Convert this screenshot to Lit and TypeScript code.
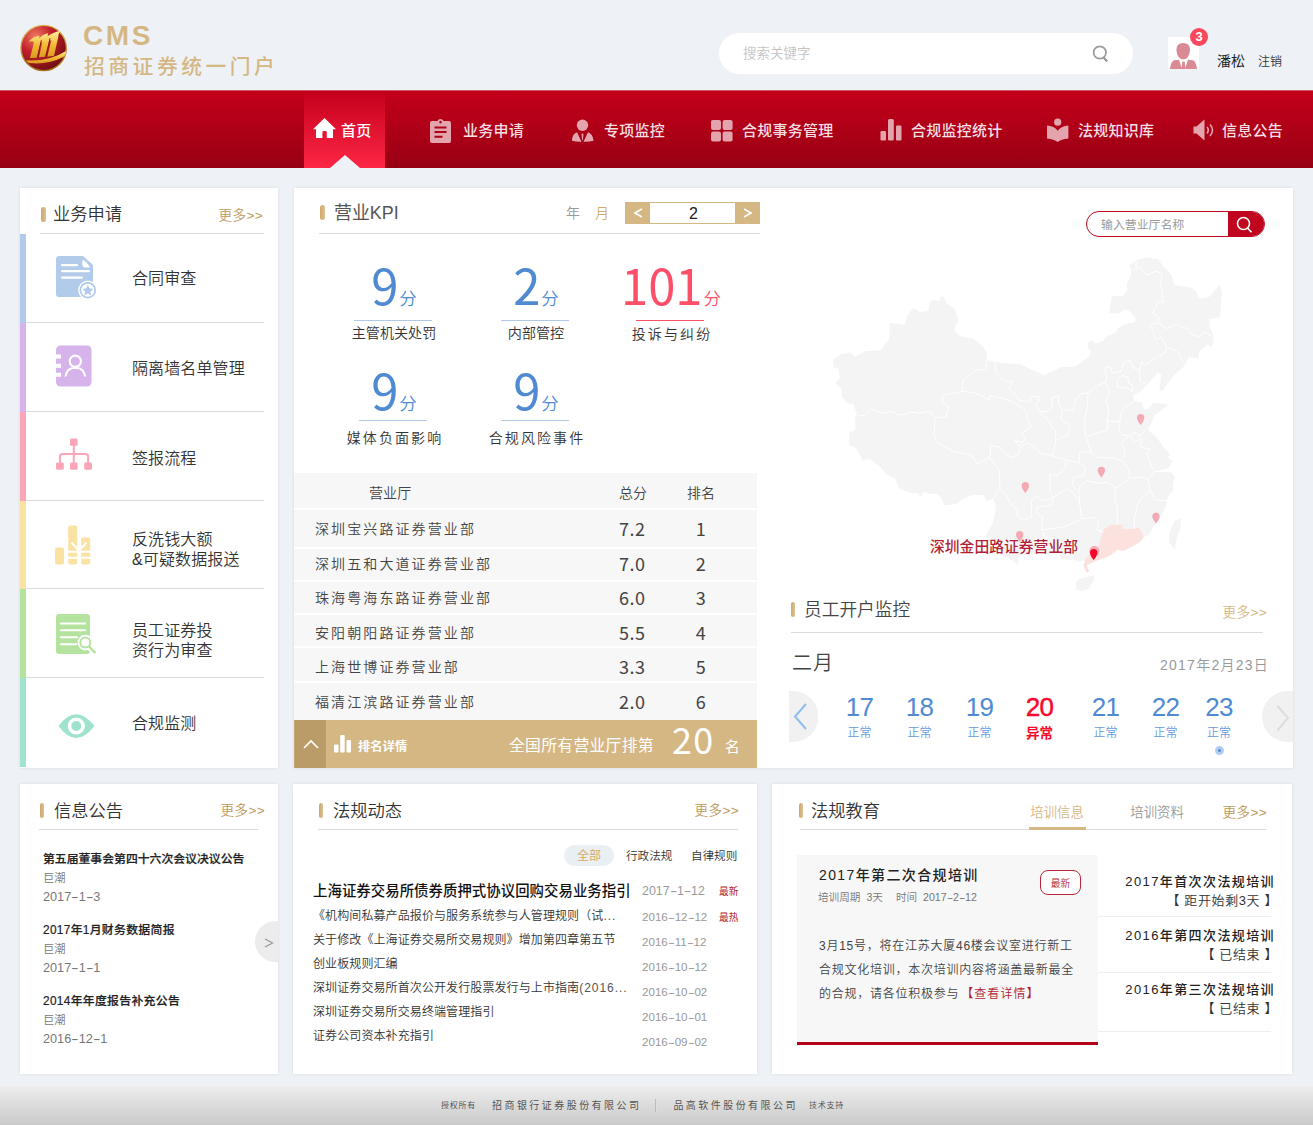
import { LitElement, html, css, svg } from "lit";
import { customElement, state } from "lit/decorators.js";

/* ---------- data ---------- */

const NAV = [
  { label: "首页", icon: svg`<path d="M11.5 0 23 11.2h-3V20h-6.2v-5.6a1.4 1.4 0 0 0-1.4-1.4h-1.6a1.4 1.4 0 0 0-1.4 1.4V20H3v-8.800H0z" fill="#fff"/>` },
  { label: "业务申请", icon: svg`<path fill-rule="evenodd" d="M2 2h5.500a3.200 3.200 0 0 1 6 0H19a2 2 0 0 1 2 2v18a2 2 0 0 1-2 2H2a2 2 0 0 1-2-2V4a2 2 0 0 1 2-2zM4.500 7.500v2h12v-2zM4.500 12v2h12v-2zM4.500 16.800v2h8v-2zM10.500 1.800a1.300 1.300 0 1 0 .01 0z"/>` },
  { label: "专项监控", icon: svg`<circle cx="10.500" cy="6.200" r="5.700"/><path d="M5 13.200 9.500 22.800Q4 23 0 21.800 0 15 5 13.200zM16 13.200 11.500 22.800Q17 23 21.500 21.800 21 15 16 13.200zM10.500 14.300l1 1-.7 6h-.6l-.7-6z"/>` },
  { label: "合规事务管理", icon: svg`<rect y="1" width="10" height="10" rx="2"/><rect x="11.600" y="1" width="10" height="10" rx="2"/><rect y="12.400" width="10" height="10" rx="2"/><rect x="11.600" y="12.400" width="10" height="10" rx="2"/>` },
  { label: "合规监控统计", icon: svg`<rect x=".5" y="12" width="5.500" height="9.500" rx="1.200"/><rect x="8" y="0" width="5.800" height="21.500" rx="1.500"/><rect x="16" y="6.500" width="5.500" height="15" rx="1.200"/>` },
  { label: "法规知识库", icon: svg`<circle cx="10.700" cy="3.200" r="3.600"/><path d="M0 6.600q7 .3 10.700 5.200Q14.500 7 21.400 6.600V19.500Q14 20 10.700 23 7 20 0 19.500z"/>` },
  { label: "信息公告", icon: svg`<path d="M.5 7.500h3L11.500.5v21L3.500 14.500h-3z"/><path d="M14 8q2.600 3 0 6.500M17 5.500q5 5.500 0 11.500" fill="none" stroke="#e3a4ad" stroke-width="1.600"/>` },
];

const APPLY = [
  { tone: "blue", lines: ["合同审查"], icon: svg`
    <path d="M4 22h24l10 9v29q0 3-3 3H4q-3 0-3-3V25q0-3 3-3z"/>
    <path d="M27.300 26q4.500 1 7.500 7.500h-4.500q-3 0-3-3z" fill="#fff"/>
    <path d="M7 31.200h15M7 37.200h27M7 43.600h20" stroke="#fff" stroke-width="2.200" stroke-linecap="round"/>
    <circle cx="32.800" cy="56.200" r="9.600" fill="#fff"/><circle cx="32.800" cy="56.200" r="7.400" fill="none" stroke="#b2cbeb" stroke-width="1.700"/>
    <path d="M32.800 51l1.700 3.300 3.700.6-2.700 2.600.6 3.700-3.300-1.700-3.300 1.700.6-3.700-2.700-2.600 3.700-.6z"/>` },
  { tone: "purple", lines: ["隔离墙名单管理"], icon: svg`
    <rect x="1" y="22.500" width="35.500" height="41" rx="4.500"/>
    <path d="M0 33.500h6M0 42.700h6M0 51.800h6" stroke="#fff" stroke-width="4"/>
    <circle cx="20.300" cy="38.200" r="5.600" fill="none" stroke="#fff" stroke-width="2.100"/>
    <path d="M10.500 53.500q1-8.600 9.800-8.800 8.800.2 9.800 8.800" fill="none" stroke="#fff" stroke-width="2.100"/>` },
  { tone: "pink", lines: ["签报流程"], icon: svg`
    <rect x="15" y="26.500" width="7.600" height="7.300" rx="1.400"/><rect x="1" y="50.500" width="7.800" height="7.200" rx="1.400"/><rect x="15" y="50.500" width="7.600" height="7.200" rx="1.400"/><rect x="29.200" y="50.500" width="7.800" height="7.200" rx="1.400"/>
    <path d="M18.800 33v18M4.900 51v-6.500q0-2.500 2.500-2.500h23.200q2.500 0 2.500 2.500V51" fill="none" stroke="#fba5b8" stroke-width="2"/>` },
  { tone: "yellow", lines: ["反洗钱大额", "&可疑数据报送"], icon: svg`
    <rect x="0" y="46.500" width="9" height="17" rx="2.200"/><rect x="13.200" y="24.500" width="9" height="39" rx="2.200"/><rect x="26.200" y="36.500" width="9" height="27" rx="2.200"/>
    <path d="M16.500 41.500l7.300 8M31.500 41.500l-7.300 8M13 50.700h23M13 56.700h23" fill="none" stroke="#fff" stroke-width="2"/>` },
  { tone: "green", lines: ["员工证券投", "资行为审查"], icon: svg`
    <rect x="1" y="25" width="34" height="40" rx="3"/>
    <path d="M6 34.500h24M6 41.300h24M6 48.300h16M6 55.200h15" stroke="#fff" stroke-width="2.100" stroke-linecap="round"/>
    <circle cx="30.300" cy="53.600" r="7.800" fill="#fff"/><path d="M34 58l7 6" stroke="#fff" stroke-width="6"/>
    <circle cx="30.300" cy="53.600" r="5" fill="none" stroke="#b4e3a0" stroke-width="2"/><path d="M34 57.500l6.500 6.500" stroke="#b4e3a0" stroke-width="2.300"/>` },
  { tone: "teal", lines: ["合规监测"], icon: svg`
    <path d="M3.500 48Q21 24.500 39.500 48 21 72 3.500 48z"/><circle cx="21.300" cy="48" r="6.800" fill="none" stroke="#fff" stroke-width="3.600"/>` },
];

const KPIS = [
  { value: "9", label: "主管机关处罚", alert: false },
  { value: "2", label: "内部管控", alert: false },
  { value: "101", label: "投诉与纠纷", alert: true },
  { value: "9", label: "媒体负面影响", alert: false },
  { value: "9", label: "合规风险事件", alert: false },
];

const BRANCHES = [
  ["深圳宝兴路证券营业部", "7.2", "1"],
  ["深圳五和大道证券营业部", "7.0", "2"],
  ["珠海粤海东路证券营业部", "6.0", "3"],
  ["安阳朝阳路证券营业部", "5.5", "4"],
  ["上海世博证券营业部", "3.3", "5"],
  ["福清江滨路证券营业部", "2.0", "6"],
];

const DAYS = [17, 18, 19, 20, 21, 22, 23];

const NOTICES = [
  ["第五届董事会第四十六次会议决议公告", "2017-1-3"],
  ["2017年1月财务数据简报", "2017-1-1"],
  ["2014年年度报告补充公告", "2016-12-1"],
];

const RULES = [
  ["上海证券交易所债券质押式协议回购交易业务指引", ""],
  ["《机构间私募产品报价与服务系统参与人管理规则（试", "..."],
  ["关于修改《上海证券交易所交易规则》增加第四章第五节", ""],
  ["创业板规则汇编", ""],
  ["深圳证券交易所首次公开发行股票发行与上市指南", "(2016..."],
  ["深圳证券交易所交易终端管理指引", ""],
  ["证券公司资本补充指引", ""],
];
const RULE_DATES = ["2017-1-12", "2016-12-12", "2016-11-12", "2016-10-12", "2016-10-02", "2016-10-01", "2016-09-02"];

const TRAININGS = [
  ["2017年首次次法规培训", "【 距开始剩3天 】"],
  ["2016年第四次法规培训", "【 已结束 】"],
  ["2016年第三次法规培训", "【 已结束 】"],
];

const PINS = [[962, 537], [844, 695], [616, 741], [1008, 833], [599, 888]];

/* Dates are set with wide dashes. */
const date = (s: string) => s.split("-").map((p, i) => (i ? html`<span class="dash">-</span>${p}` : p));

const chinaMap = svg`
  <g fill="#f4f4f4">
    <path d="M40 360 62 342 92 338 105 350 135 334 182 330 208 296 209 248 253 254 262 226 280 203 300 216 326 212 328 186 342 180 358 184 362 170 370 167 378 188 404 206 412 228 414 246 404 262 406 276 420 288 460 296 490 320 499 336 501 360 550 370 600 372 630 386 672 406 725 381 765 380 810 348 812 334 803 322 804 306 818 300 826 311 850 302 860 288 886 280 892 266 915 252 946 246 946 234 928 212 914 208 900 220 868 220 868 206 876 168 908 168 922 150 920 132 932 108 934 88 926 78 950 60 980 52 1014 58 1032 82 1054 104 1064 136 1110 142 1128 154 1138 176 1168 170 1184 150 1200 134 1206 160 1200 232 1168 238 1170 262 1182 292 1176 320 1160 314 1136 336 1136 354 1106 352 1096 376 1064 404 1044 428 1028 452 1018 452 1024 402 1012 398 998 416 978 436 962 454 940 464 942 484 966 488 972 508 986 506 1000 488 1044 492 1038 500 1004 526 998 544 984 566 990 576 1006 586 1032 624 1052 644 1042 652 1058 662 1046 684 1010 694 1054 696 1066 714 1058 730 1060 750 1044 770 1038 796 1026 826 1010 846 986 884 972 892 940 918 906 934 894 930 866 948 838 958 822 962 800 976 790 960 778 966 762 960 722 958 718 940 596 946 594 976 580 964 562 952 540 944 536 916 504 904 498 884 520 846 528 800 520 778 500 782 490 766 460 764 428 778 410 792 372 796 366 776 352 762 330 762 310 756 300 774 294 760 268 758 236 744 226 716 200 704 180 680 150 658 128 660 108 624 86 616 88 578 106 568 106 546 104 528 112 526 100 492 82 490 66 470 64 446 46 428 60 416 54 384 40 382z"/>
    <path d="M1082 836 1082 864 1070 896 1064 930 1046 906 1048 878 1064 842z"/>
    <path d="M780 1016 822 1006 824 1018 806 1046 786 1054 768 1048 768 1026z"/>
  </g>
  <path fill="#fbe2de" d="M870 854 910 854 906 866 940 866 956 862 972 890 960 906 940 918 908 934 894 928 864 950 830 962 800 976 808 994 800 998 790 976 800 950 812 944 836 916 850 870z"/>
  <g fill="none" stroke="#fff" stroke-width="3" stroke-linejoin="round">
    <path d="M501 360 497 388 462 392 450 406 430 420 426 454 400 460 368 466 368 486 386 500 378 530 345 534 330 514 300 520 276 516 240 526 214 514 186 520 154 508 134 526 112 528"/>
    <path d="M345 534 342 586 350 608 400 634 456 646 472 672 492 660 510 654 538 690 540 750"/>
    <path d="M426 454 462 458 490 470 508 482 510 466 560 478 586 490 614 508 622 530 632 562 606 580 616 600 606 606 584 602 602 620 596 644 576 652 554 642 540 622 510 616 512 640 506 656"/>
    <path d="M524 366 530 402 550 422 578 424 566 444 584 462 600 482 630 484 632 470 656 468 656 484 646 494 660 514 680 516 696 500 696 474 716 466 716 494 728 510 760 510 766 480 782 462 804 458"/>
    <path d="M660 514 672 530 688 542 696 564 708 570 706 600 742 586 746 572 752 556 724 540 726 512"/>
    <path d="M708 600 698 646 660 640 646 620 620 608 606 618"/>
    <path d="M698 648 738 660 776 668 780 636 814 636"/>
    <path d="M804 458 802 500 794 540 796 586 804 606 814 640 830 652 880 654 910 664 926 690 930 714 966 712 984 718 1004 694 1054 696"/>
    <path d="M804 460 830 438 856 428 860 410 854 384 870 380 878 400 904 394 910 368 930 360 938 382 958 390"/>
    <path d="M856 428 870 460 858 480 866 510 862 544 900 544 902 520 916 500 940 486"/>
    <path d="M862 544 862 570 800 590M900 544 896 572 910 586 928 586 946 578 960 588 980 566"/>
    <path d="M892 420 906 406 924 412 926 430 938 436 938 456 922 444 892 442zM958 390 960 424 976 430"/>
    <path d="M958 392 966 364 974 376 1014 350 1036 338 1040 320 1064 330 1080 342 1082 356 1096 376"/>
    <path d="M1040 320 1022 292 1008 300 998 272 988 256 1014 248 1040 266 1070 252 1090 264 1104 264 1114 282 1136 290 1156 276 1180 292"/>
    <path d="M948 62 948 90 960 80 980 106 1008 94 1026 100 1022 130 1030 190 1018 180 998 220 1018 232 1012 248"/>
    <path d="M926 588 904 610 916 636 908 656M930 588 946 606 966 596 960 620 992 628 980 640 996 684 1008 694"/>
    <path d="M738 662 736 684 714 706 690 704 690 760 700 772 740 746 760 758 776 780"/>
    <path d="M776 668 796 682 792 706 760 714 758 736 776 754 780 740 800 722 840 730 862 726 886 744 930 714"/>
    <path d="M776 754 780 800 786 836 824 832 836 846 830 870 850 876"/>
    <path d="M886 744 884 780 892 800 892 854M984 718 990 750 1006 780 1040 782M990 752 956 784 944 828 942 866"/>
    <path d="M540 750 556 760 572 790 592 808 592 830 610 840 634 832 634 780 652 766 664 780 684 780 700 772"/>
    <path d="M700 772 694 796 650 802 650 820 668 830 664 870 690 866 730 862 786 836M668 872 672 890 720 904 720 930 700 944"/>
    <path d="M540 750 528 756 524 774"/>
  </g>`;

const pin = (x: number, y: number) => svg`<path transform="translate(${x} ${y})" d="M0 18Q-11 4-11-4A11 11 0 0 1 11-4Q11 4 0 18z"/>`;

@customElement("app-root")
export class AppRoot extends LitElement {
  @state() private month = 2;

  static styles = css`
    :host {
      display: block;
      width: 1313px;
      height: 1125px;
      overflow: hidden;
      background: #eef2f6;
      color: #444;
      font-family: "Liberation Sans", "Noto Sans CJK SC", sans-serif;
      font-weight: 350;
      font-size: 14px;
      line-height: 20px;
      white-space: nowrap;
    }
    * { box-sizing: border-box; }
    svg { display: block; flex: none; }
    .dash { display: inline-block; width: 0.59em; text-align: center; transform: scaleX(1.8); }

    .header { height: 90px; display: flex; padding-left: 20px; }
    .logo { margin-top: 23px; }
    .brand { width: 636px; margin-left: 15px; color: #d5b784; flex: none; }
    .cms { margin-top: 21px; font: 700 28px/30px "Liberation Sans", sans-serif; letter-spacing: 2.6px; }
    .site { margin: 4px 0 0 1px; font-size: 20.800px; line-height: 24px; font-weight: 500; letter-spacing: 3.5px; }
    .search { width: 414px; height: 41px; margin-top: 33px; border-radius: 21px; background: #fff; display: flex; align-items: center; justify-content: space-between; padding: 0 24px; color: #c4c4c4; font-size: 13.5px; flex: none; }
    .avatar { position: relative; width: 31px; height: 32px; margin: 37px 0 0 35px; background: #fff; flex: none; }
    .count { position: absolute; left: 22px; top: -9px; width: 18px; height: 18px; border-radius: 9px; background: #f9475d; color: #fff; font-size: 13px; font-weight: 700; line-height: 18px; text-align: center; }
    .user { margin: 51px 0 0 18px; color: #222; font-size: 14px; font-weight: 400; }
    .logout { margin: 52px 0 0 13px; color: #333; font-size: 12px; }

    .nav { height: 78px; padding-left: 304px; display: grid; grid-template-columns: 126px 142px 139px 169px 167px 146px 120px; background: linear-gradient(#c4001b, #980013); border-top: 1px solid #cf5566; color: #f6dfe2; font-size: 15px; font-weight: 500; letter-spacing: 0.25px; }
    .item { display: flex; align-items: flex-start; gap: 9px; padding-top: 28px; }
    .item svg { fill: #e3a4ad; overflow: visible; }
    .item span { padding-top: 2px; }
    .item:nth-child(2) { gap: 11px; }
    .item:nth-child(3) { gap: 10px; }
    .item:last-child { gap: 7px; }
    .item.active { position: relative; width: 81px; padding: 27px 0 0 9px; gap: 5px; color: #fff; background: linear-gradient(#c4001b, #fd2645); }
    .item.active span { padding-top: 3px; }
    .notch { position: absolute; left: 26px; bottom: 0; border: solid transparent; border-width: 0 15px 13px; border-bottom-color: #eef2f6; }

    .row { display: flex; }
    .top { margin-top: 20px; padding-left: 20px; gap: 16px; height: 580px; }
    .bottom { margin-top: 16px; padding-left: 20px; gap: 15px; height: 290px; }
    .card { background: #fff; box-shadow: 0 0 3px rgba(60, 80, 100, 0.13); flex: none; }

    .head { display: flex; border-bottom: 1px solid #dcdcdc; }
    .mark { width: 5px; height: 15px; border-radius: 2.500px; background: linear-gradient(90deg, #cda96a, #dcc195); flex: none; }
    .title { font-size: 17.3px; line-height: 22px; color: #333; flex: 1; }
    .more { color: #bd9a5b; font-size: 13.6px; letter-spacing: 0.35px; }

    /* business applications */
    .apply { width: 258px; }
    .apply .head { height: 46px; margin: 0 14px 0 20px; padding-top: 15px; }
    .apply .mark { margin: 4px 7px 0 1px; }
    .apply .more { margin: 3px 1px 0 0; }
    .entry { display: flex; height: 89px; padding-left: 0; font-size: 16px; letter-spacing: 0.12px; color: #333; }
    .entry:nth-child(3), .entry:nth-child(5) { height: 88.500px; }
    .stripe { width: 6px; }
    .entry-body { width: 238px; display: flex; padding-left: 29px; border-bottom: 1px solid #dcdcdc; }
    .entry:last-child .entry-body { border: 0; }
    .entry-text { margin-left: 33px; padding-top: 35px; }
    .two { padding-top: 29px; }
    .green .two { padding-top: 32px; }
    .purple .entry-text, .teal .entry-text { padding-top: 36px; }
    .pink .entry-text { padding-top: 37px; }
    .blue .stripe { background: #b2cbeb; } .blue svg { fill: #b2cbeb; }
    .purple .stripe { background: #d6b4eb; } .purple svg { fill: #d6b4eb; }
    .pink .stripe { background: #fba5b8; } .pink svg { fill: #fba5b8; }
    .yellow .stripe { background: #fae2a3; } .yellow svg { fill: #fae2a3; }
    .green .stripe { background: #b4e3a0; } .green svg { fill: #b4e3a0; }
    .teal .stripe { background: #9fe3ce; } .teal svg { fill: #9fe3ce; }

    /* KPI */
    .overview { width: 999px; display: flex; }
    .kpi { width: 466px; flex: none; }
    .kpi .head { height: 46px; margin-left: 25px; padding-top: 14px; }
    .kpi .mark { margin: 3px 9px 0 1px; }
    .kpi .title { color: #555; line-height: 23px; font-weight: 400; font-size: 17.900px; }
    .unit { margin: 1px 15px 0 0; color: #999; }
    .unit.on { margin-right: 16px; color: #d0ab6b; }
    .stepper { width: 135px; height: 22px; display: flex; border: 1px solid #d5b784; color: #222; }
    .stepper b { width: 24px; background: #d5b784; display: flex; align-items: center; justify-content: center; }
    .stepper span { flex: 1; text-align: center; font-size: 16px; line-height: 21px; padding-left: 2px; }
    .grid { display: grid; grid-template-columns: 142px 142px 128px; grid-auto-rows: 105px; padding: 25px 0 0 29px; height: 239px; }
    .cell { display: flex; flex-direction: column; align-items: center; height: 105px; color: #333; }
    .score { height: 50px; font: 400 49px/50px "Noto Sans CJK SC", sans-serif; color: #4f8ad3; }
    .score small { font-size: 17.5px; line-height: 20px; font-weight: 350; margin-left: 1px; }
    .rule { width: 68px; height: 1px; margin: 11px 3px 0 0; background: #b0c9ea; }
    .cell:first-child .rule { width: 78px; }
    .caption { margin-top: 2px; font-size: 14.1px; }
    .cell:nth-child(n + 3) .caption { letter-spacing: 2.1px; margin-left: 2px; font-size: 14px; }
    .cell:nth-child(3) .caption { margin-top: 3px; }
    .alert .score { color: #fd4f69; }
    .alert .rule { background: #fd4f69; }
    .cell:nth-child(n + 4) .rule { margin-top: 6px; }
    .cell:nth-child(n + 4) .caption { margin-top: 7px; }

    .table { width: 463px; background: #f7f7f7; height: 247px; }
    .tr { display: grid; grid-template-columns: 304px 63px 80px; padding: 5px 0 0 21px; height: 33px; border-bottom: 2px solid #fff; color: #444; }
    .tr.th { height: 37px; padding-top: 10px; }
    .th .c1 { padding-left: 54px; letter-spacing: 0.1px; }
    .c1 { letter-spacing: 2.1px; }
    .c3 { text-align: center; width: 40px; margin-left: -1px; }
    .th .c3 { margin-left: 0; text-align: left; width: auto; padding-left: 5px; }
    .n { font: 400 18px/20px "Noto Sans CJK SC", sans-serif; margin-top: -1px; letter-spacing: 0.5px; }
    .tr:nth-child(2) { height: 39px; padding-top: 9px; }
    .tr:nth-child(4) { padding-top: 6px; }
    .tr:nth-child(5) { padding-top: 8px; }
    .tr:nth-child(6) { height: 35px; padding-top: 9px; }
    .tr:nth-child(7) { height: 38px; padding-top: 9px; border: 0; }
    .total { width: 463px; height: 48px; display: flex; background: #d5b784; color: #fff; border-left: 1px solid #c6a873; font-size: 15.8px; }
    .fold { width: 31px; background: #ba9c68; padding: 19px 0 0 8px; }
    .total-icon { margin: 15px 7px 0 8px; }
    .detail { width: 151px; padding-top: 17px; font-size: 12.3px; font-weight: 700; }
    .whole { padding-top: 16px; font-weight: 400; letter-spacing: 0.3px; }
    .place { font: 400 36px/36px "Noto Sans CJK SC", sans-serif; letter-spacing: 1.5px; margin-left: 18px; }
    .suffix { margin: 17px 0 0 10px; font-size: 15px; font-weight: 400; }

    /* branch map */
    .side { width: 533px; padding-top: 23px; position: relative; }
    .branch-search { width: 179px; height: 26px; margin-left: 326px; border: 1px solid #c0061f; border-radius: 13px; display: flex; overflow: hidden; color: #999; font-size: 11.900px; font-weight: 400; line-height: 26px; }
    .branch-search span { width: 141px; padding-left: 14px; flex: none; }
    .branch-search i { flex: 1; background: #c0061f; padding: 4px 0 0 8px; }
    .map { position: relative; margin: 3px 0 0 60px; width: 420px; height: 360px; }
    .map-label { position: absolute; left: 110px; top: 297px; color: #b21f36; font-size: 14.8px; font-weight: 500; text-shadow: 0 0 2px #fff, 0 0 2px #fff; }
    .side .head { height: 33px; margin: 0 30px 0 31px; overflow: visible; }
    .side .mark { width: 4px; margin: 2px 9px 0 0; }
    .side .title { font-size: 17.7px; line-height: 21px; color: #444; }
    .side .more { margin: 3px -4px 0 0; color: #d5b784; }
    .month { display: flex; justify-content: space-between; margin: 18px 24px 0 32px; font-size: 20px; line-height: 24px; color: #444; letter-spacing: 1px; }
    .month small { font-size: 14px; color: #999; letter-spacing: 1.25px; padding-top: 2px; }
    .calendar { display: flex; margin: 14px 0 0 29px; }
    .days { width: 444px; display: grid; grid-template-columns: 60px 60px 60px 60px 72px 48px 59px; padding-left: 11.500px; color: #4f8ad3; text-align: center; }
    .days b { display: block; font-size: 26px; line-height: 33px; font-weight: 400; letter-spacing: -0.8px; }
    .days small { display: block; font-size: 12px; line-height: 19px; color: #6a9bdb; }
    .bad b, .bad small { color: #f9092c; }
    .bad b { -webkit-text-stroke: 0.5px #f9092c; }
    .bad small { font-size: 13.5px; font-weight: 700; }
    .dot { width: 9px; height: 9px; border-radius: 5px; margin: 3px auto 0; background: #4f8ad3; border: 3px solid #b2cdf0; }

    /* notices */
    .news { width: 258px; position: relative; }
    .bottom .head { height: 46px; padding-top: 16px; }
    .bottom .mark { width: 4px; margin: 3px 0 0 1px; }
    .news .head { margin: 0 19px; }
    .news .title { margin-left: 10px; }
    .bottom .more { margin-top: 1px; }
    .news .more { margin-right: -6px; }
    .notice { margin: 0 0 13px 23px; height: 58px; line-height: 19px; font-size: 11.3px; color: #777; }
    .news .head + .notice { margin-top: 20px; }
    .notice b { display: block; font-size: 11.85px; font-weight: 500; color: #222; -webkit-text-stroke: 0.2px #222; letter-spacing: 0.32px; }
    .news .head + .notice b { letter-spacing: 0; }
    .notice .when { font-size: 12.700px; }
    .next { position: absolute; right: 0; top: 137px; width: 23px; height: 41px; border-radius: 21px 0 0 21px; background: #ececec; color: #999; padding: 17px 0 0 9px; }

    /* rules */
    .rules { width: 464px; }
    .rules .head { margin: 0 19px 0 25px; }
    .rules .title { margin-left: 10px; }
    .rules .more { margin-right: -1px; }
    .chips { display: flex; margin: 15px 0 0 271px; font-size: 11.6px; color: #333; }
    .chip { padding-top: 1px; margin-right: 18.500px; }
    .chip.on { width: 50px; height: 21px; border-radius: 11px; background: #eaeff4; color: #d3ac67; font-size: 12px; line-height: 21px; text-align: center; margin-right: 12px; font-weight: 400; }
    .cols { display: flex; padding: 12px 0 0 20px; color: #333; }
    .names { width: 329px; font-size: 12px; line-height: 24.1px; letter-spacing: 0.1px; }
    .names div:first-child { font-size: 14.400px; font-weight: 500; color: #111; line-height: 27px; letter-spacing: 0.05px; margin-bottom: -1px; }
    .tail { letter-spacing: 0.95px; color: #555; }
    .dates { width: 77px; font-size: 11.6px; line-height: 25px; color: #999; padding-top: 1px; }
    .dates div:first-child { font-size: 12.400px; }
    .tags { font-size: 9.700px; line-height: 26px; padding-top: 1px; color: #b01c32; font-weight: 400; }

    /* training */
    .training { width: 520px; }
    .training .head { margin: 0 25px 0 28px; padding-top: 16px; }
    .training .mark { margin-left: -1px; }
    .training .title { margin-left: 8px; }
    .tab { height: 30px; width: 57px; text-align: center; font-size: 13.4px; padding-top: 3px; margin-right: 43px; color: #999; }
    .tab.on { color: #d5b784; border-bottom: 3px solid #d5b784; }
    .tab.off { margin-right: 37px; }
    .training .more { margin-top: 3px; }
    .panels { display: flex; padding: 25px 0 0 25px; }
    .panel { width: 301px; height: 190px; background: #f7f7f7; border-bottom: 3px solid #b5001a; padding: 10px 0 0 22px; font-size: 12px; color: #444; }
    .lead { display: flex; justify-content: space-between; padding-right: 17px; }
    .lead b { display: block; font-size: 14px; font-weight: 500; color: #222; letter-spacing: 1.38px; }
    .meta { display: flex; font-size: 10.600px; line-height: 24px; color: #777; margin-left: -1px; }
    .meta > span { margin-right: 6px; }
    .meta > .gap { margin-right: 13px; }
    .badge { width: 41px; height: 25px; margin-top: 5px; border: 1px solid #b9253a; border-radius: 8px; background: #fff; color: #b01c32; font-size: 9.800px; line-height: 25px; text-align: center; }
    .text { padding-top: 25px; line-height: 24px; letter-spacing: 0.75px; }
    .text .link { color: #b01c32; margin-left: 2px; letter-spacing: 1.05px; }
    .list { width: 173px; font-size: 13px; }
    .course { height: 56px; border-bottom: 1px solid #eee; padding-top: 8px; line-height: 19px; margin-bottom: 1px; }
    .course:first-child { height: 62px; padding-top: 17px; }
    .course:nth-child(2) { height: 55px; }
    .course:last-child { height: 58px; padding-top: 6px; }
    .course div { display: flex; justify-content: flex-end; margin-right: -4px; letter-spacing: 1.4px; color: #222; font-weight: 500; }
    .course .status { letter-spacing: 0.6px; margin-right: -7px; font-weight: 350; color: #333; }

    .footer { margin-top: 12px; height: 39px; display: flex; padding: 10px 0 0 441px; background: linear-gradient(#ededed, #cacaca); font-size: 10px; color: #555; font-weight: 400; letter-spacing: 2.450px; }
    .footer small { font-size: 8px; letter-spacing: 0.75px; }
    .footer .org { margin-left: 16px; }
    .line { width: 2px; height: 13px; margin: 3px 0 0 14px; background: #ddd; border-left: 1px solid #bbb; }
    .footer .support { margin-left: 11px; }
  `;

  render() {
    return html`
      <header class="header">
        <svg class="logo" width="48" height="50" viewBox="0 0 144 150">
          <defs>
            <radialGradient id="ball" cx=".32" cy=".25" r=".8"><stop offset="0" stop-color="#ef7a62"/><stop offset=".45" stop-color="#c2202a"/><stop offset="1" stop-color="#6d0d12"/></radialGradient>
            <linearGradient id="gold" x2="0" y2="1"><stop offset="0" stop-color="#fff0a0"/><stop offset=".5" stop-color="#f2bd35"/><stop offset="1" stop-color="#d99a22"/></linearGradient>
            <linearGradient id="rim" x2="0" y2="1"><stop offset="0" stop-color="#dcb558"/><stop offset="1" stop-color="#a8741f"/></linearGradient>
          </defs>
          <circle cx="71" cy="75" r="68" fill="url(#ball)" stroke="url(#rim)" stroke-width="4"/>
          <g fill="url(#gold)">
            <path d="M26 56Q38 40 58 38L58 46Q68 34 84 31L83 40Q98 28 120 24 114 34 114 46L102 98 82 101 94 52 88 54 75 101 57 103 67 58 61 61 50 104 30 105 42 58Q36 52 26 56z"/>
            <path d="M18 112Q88 116 138 84 138 96 130 102 84 126 26 120z"/>
          </g>
          <path d="M64 52 53 102M90 46 78 100" stroke="#8c1417" stroke-width="3"/>
        </svg>
        <div class="brand"><div class="cms">CMS</div><div class="site">招商证券统一门户</div></div>
        <div class="search">
          <span>搜索关键字</span>
          <svg width="17" height="18" viewBox="0 0 17 18" fill="none" stroke="#999" stroke-width="1.700"><circle cx="7.800" cy="7.500" r="6.200"/><path d="M11.500 12.500l3.700 4" stroke-width="2.200"/></svg>
        </div>
        <div class="avatar">
          <svg width="31" height="32" viewBox="0 0 31 32" fill="#d98a94"><path d="M15.200 6q6.800 0 6.800 7-.8 9.300-6.800 9.500Q9.200 22.300 8.400 13q0-7 6.800-7z"/><path d="M2 32q1-7.500 4-8.700l5-.6 3 9.300zM29 32q-1-7.500-4-8.700l-5-.6L17 32zM14.300 24.500h2.400l.8 7.500h-4z"/></svg>
          <span class="count">3</span>
        </div>
        <span class="user">潘松</span><span class="logout">注销</span>
      </header>

      <nav class="nav">
        ${NAV.map((n, i) => html`<a class="item ${i ? "" : "active"}">
          <svg width=${i ? 22 : 23} height="24">${n.icon}</svg><span>${n.label}</span>${i ? "" : html`<i class="notch"></i>`}</a>`)}
      </nav>

      <div class="row top">${this.applyCard()}<section class="card overview">${this.kpi()}${this.side()}</section></div>
      <div class="row bottom">${this.news()}${this.rules()}${this.training()}</div>

      <footer class="footer">
        <small>授权所有</small><span class="org">招商银行证券股份有限公司</span><i class="line"></i>
        <span class="org">品高软件股份有限公司</span><small class="support">技术支持</small>
      </footer>`;
  }

  private applyCard() {
    return html`<section class="card apply">
      <div class="head"><i class="mark"></i><span class="title">业务申请</span><span class="more">更多&gt;&gt;</span></div>
      ${APPLY.map((a) => html`<div class="entry ${a.tone}"><i class="stripe"></i><div class="entry-body">
        <svg width="44" height="86" viewBox="0 0 44 86">${a.icon}</svg>
        <div class="entry-text ${a.lines.length > 1 ? "two" : ""}">${a.lines.map((l) => html`<div>${l}</div>`)}</div></div></div>`)}
    </section>`;
  }

  private kpi() {
    const chevron = (d: string) => svg`<path d=${d} fill="none" stroke="#fff" stroke-width="1.700"/>`;
    return html`<div class="kpi">
      <div class="head"><i class="mark"></i><span class="title">营业KPI</span>
        <span class="unit">年</span><span class="unit on">月</span>
        <div class="stepper"><b @click=${() => this.month--}><svg width="9" height="10">${chevron("M8 1 1 5l7 4")}</svg></b><span>${this.month}</span><b @click=${() => this.month++}><svg width="9" height="10">${chevron("M1 1l7 4-7 4")}</svg></b></div>
      </div>
      <div class="grid">${KPIS.map((k) => html`<div class="cell ${k.alert ? "alert" : ""}">
        <div class="score">${k.value}<small>分</small></div><i class="rule"></i><div class="caption">${k.label}</div></div>`)}</div>
      <div class="table">
        <div class="tr th"><span class="c1">营业厅</span><span>总分</span><span class="c3">排名</span></div>
        ${BRANCHES.map(([a, b, c]) => html`<div class="tr"><span class="c1">${a}</span><span class="n">${b}</span><span class="n c3">${c}</span></div>`)}
      </div>
      <div class="total">
        <div class="fold"><svg width="16" height="10"><path d="M1 9l7-7 7 7" fill="none" stroke="#fff" stroke-width="1.600"/></svg></div>
        <svg class="total-icon" width="17" height="18" fill="#fff"><rect y="9.500" width="4.500" height="8" rx="1"/><rect x="6.200" y="0" width="4.500" height="17.500" rx="1"/><rect x="12.500" y="5" width="4.500" height="12.500" rx="1"/></svg>
        <span class="detail">排名详情</span><span class="whole">全国所有营业厅排第</span><span class="place">20</span><span class="suffix">名</span>
      </div>
    </div>`;
  }

  private side() {
    return html`<div class="side">
      <div class="branch-search"><span>输入营业厅名称</span><i><svg width="17" height="18" fill="none" stroke="#fff" stroke-width="1.600"><circle cx="7.500" cy="7.500" r="6"/><path d="M11.500 12l4 4.300"/></svg></i></div>
      <div class="map">
        <svg width="420" height="360" viewBox="0 0 1260 1080">${chinaMap}
          <g fill="#f4aab4">${PINS.map(([x, y]) => pin(x, y))}<circle cx="823" cy="933" r="15"/></g>
          <g fill="#f9052a">${pin(821, 942)}</g></svg>
        <span class="map-label">深圳金田路证券营业部</span>
      </div>
      <div class="head"><i class="mark"></i><span class="title">员工开户监控</span><span class="more">更多&gt;&gt;</span></div>
      <div class="month"><span>二月</span><small>2017年2月23日</small></div>
      <div class="calendar">
        <svg width="29" height="51"><path d="M0 0h4a25.500 25.500 0 0 1 0 51H0z" fill="#f1f1f1"/><path d="M17 13 6 25.500 17 38" fill="none" stroke="#8fbdf0" stroke-width="2"/></svg>
        <div class="days">${DAYS.map((d) => html`<div class=${d === 20 ? "bad" : ""}><b>${d}</b><small>${d === 20 ? "异常" : "正常"}</small>${d === 23 ? html`<div class="dot"></div>` : ""}</div>`)}</div>
        <svg width="31" height="51"><path d="M31 0h-5.500a25.500 25.500 0 0 0 0 51H31z" fill="#f1f1f1"/><path d="M15.500 15 26 27 15.500 39.500" fill="none" stroke="#ddd" stroke-width="2"/></svg>
      </div>
    </div>`;
  }

  private news() {
    return html`<section class="card news">
      <div class="head"><i class="mark"></i><span class="title">信息公告</span><span class="more">更多&gt;&gt;</span></div>
      ${NOTICES.map(([t, d]) => html`<div class="notice"><b>${t}</b><div>巨潮</div><div class="when">${date(d)}</div></div>`)}
      <div class="next"><svg width="10" height="10"><path d="M1 1l7.500 4L1 9" fill="none" stroke="#999" stroke-width="1.300"/></svg></div>
    </section>`;
  }

  private rules() {
    return html`<section class="card rules">
      <div class="head"><i class="mark"></i><span class="title">法规动态</span><span class="more">更多&gt;&gt;</span></div>
      <div class="chips"><span class="chip on">全部</span><span class="chip">行政法规</span><span class="chip">自律规则</span></div>
      <div class="cols">
        <div class="names">${RULES.map(([r, tail]) => html`<div>${r}<span class="tail">${tail}</span></div>`)}</div>
        <div class="dates">${RULE_DATES.map((d) => html`<div>${date(d)}</div>`)}</div>
        <div class="tags"><div>最新</div><div>最热</div></div>
      </div>
    </section>`;
  }

  private training() {
    return html`<section class="card training">
      <div class="head"><i class="mark"></i><span class="title">法规教育</span><span class="tab on">培训信息</span><span class="tab off">培训资料</span><span class="more">更多&gt;&gt;</span></div>
      <div class="panels">
        <div class="panel">
          <div class="lead"><div><b>2017年第二次合规培训</b>
            <div class="meta"><span>培训周期</span><span class="gap">3天</span><span>时间</span><span>${date("2017-2-12")}</span></div></div>
            <div class="badge">最新</div></div>
          <div class="text"><div>3月15号，将在江苏大厦46楼会议室进行新工</div><div>合规文化培训，本次培训内容将涵盖最新最全</div><div>的合规，请各位积极参与<span class="link">【查看详情】</span></div></div>
        </div>
        <div class="list">${TRAININGS.map(([t, s]) => html`<div class="course"><div>${t}</div><div class="status">${s}</div></div>`)}</div>
      </div>
    </section>`;
  }
}
